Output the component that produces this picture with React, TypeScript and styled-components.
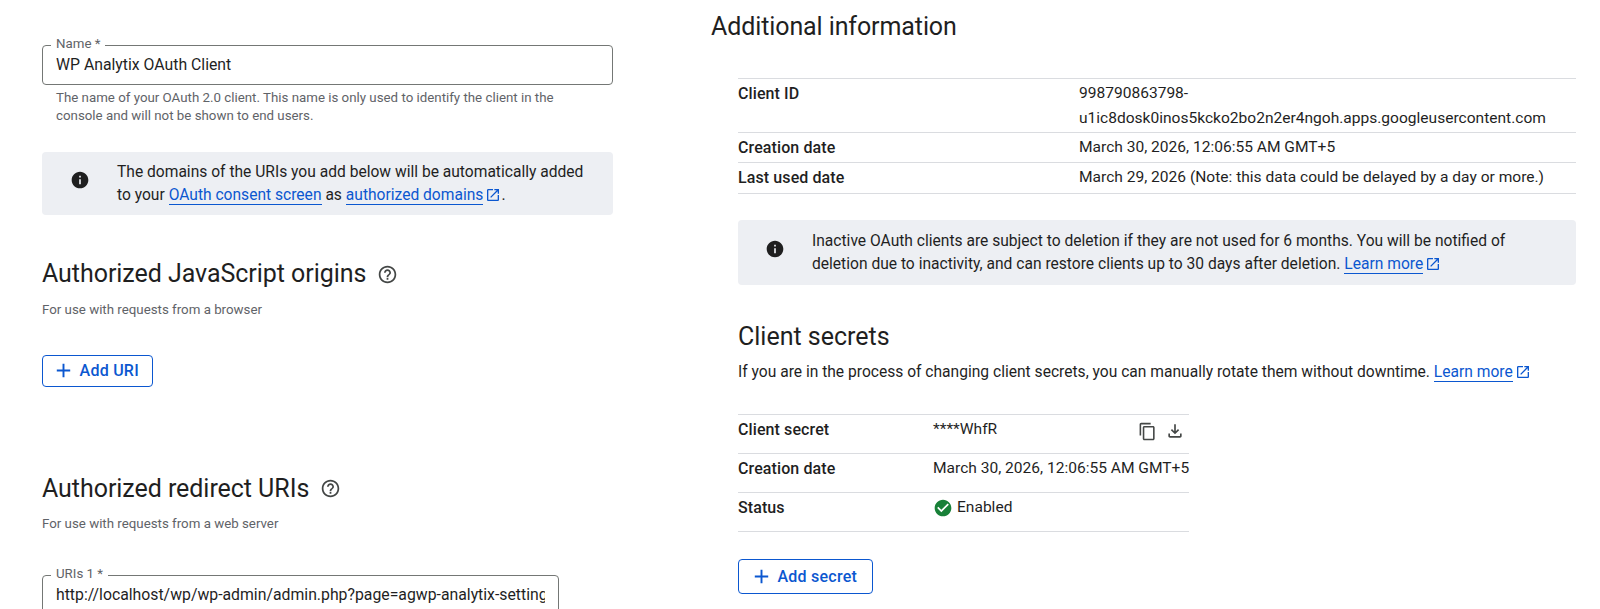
import * as React from 'react'
import styled, { createGlobalStyle } from 'styled-components'

const paths = {
  info: 'M12 2C6.48 2 2 6.48 2 12s4.48 10 10 10 10-4.48 10-10S17.52 2 12 2zm1 15h-2v-6h2v6zm0-8h-2V7h2v2z',
  help: 'M11 18h2v-2h-2v2zm1-16C6.48 2 2 6.48 2 12s4.48 10 10 10 10-4.48 10-10S17.52 2 12 2zm0 18c-4.41 0-8-3.59-8-8s3.59-8 8-8 8 3.59 8 8-3.59 8-8 8zm0-14c-2.21 0-4 1.79-4 4h2c0-1.1.9-2 2-2s2 .9 2 2c0 2-3 1.75-3 5h2c0-2.25 3-2.5 3-5 0-2.21-1.79-4-4-4z',
  external: 'M19 19H5V5h7V3H5c-1.11 0-2 .9-2 2v14c0 1.1.89 2 2 2h14c1.1 0 2-.9 2-2v-7h-2v7zM14 3v2h3.59l-9.83 9.83 1.41 1.41L19 6.41V10h2V3h-7z',
  copy: 'M16 1H4c-1.1 0-2 .9-2 2v14h2V3h12V1zm3 4H8c-1.1 0-2 .9-2 2v14c0 1.1.9 2 2 2h11c1.1 0 2-.9 2-2V7c0-1.1-.9-2-2-2zm0 16H8V7h11v14z',
  download: 'M12 16l-5-5 1.4-1.45 2.6 2.6V4h2v8.15l2.6-2.6L17 11l-5 5zM6 20c-.55 0-1.02-.2-1.41-.59C4.2 19.02 4 18.55 4 18v-3h2v3h12v-3h2v3c0 .55-.2 1.02-.59 1.41-.39.39-.86.59-1.41.59H6z',
  check: 'M12 2C6.48 2 2 6.48 2 12s4.48 10 10 10 10-4.48 10-10S17.52 2 12 2zm-2 15l-5-5 1.41-1.41L10 14.17l7.59-7.59L19 8l-9 9z',
  plus: 'M19 13h-6v6h-2v-6H5v-2h6V5h2v6h6v2z',
}

const Icon = ({ name, size, color }: { name: keyof typeof paths; size: number; color: string }) => (
  <Glyph width={size} height={size} viewBox="0 0 24 24" fill={color}>
    <path d={paths[name]} />
  </Glyph>
)

const External = () => (
  <ExternalWrap>
    <Icon name="external" size={16} color="#0b57d0" />
  </ExternalWrap>
)

const Rows = ({ rows }: { rows: { label: string; height: number; value: React.ReactNode; extra?: React.ReactNode }[] }) => (
  <>
    {rows.map(r => (
      <Row key={r.label} $height={r.height}>
        <RowLabel>{r.label}</RowLabel>
        <RowValue>{r.value}</RowValue>
        {r.extra}
      </Row>
    ))}
  </>
)

export default () => (
  <Page>
    <GlobalStyle />
    <LeftColumn>
      <Field $width={571}>
        <FieldLabel>Name *</FieldLabel>
        <FieldValue>WP Analytix OAuth Client</FieldValue>
      </Field>
      <Hint>
        The name of your OAuth 2.0 client. This name is only used to identify the client in the console and will not be
        shown to end users.
      </Hint>
      <Banner>
        <BannerIcon $width={75}>
          <Icon name="info" size={20} color="#1f1f1f" />
        </BannerIcon>
        <BannerText>
          <BannerLine>The domains of the URIs you add below will be automatically added</BannerLine>
          <BannerLine>
            to your <Link>OAuth consent screen</Link> as <Link>authorized domains</Link>
            <External />.
          </BannerLine>
        </BannerText>
      </Banner>
      <SectionHead $top={45}>
        <Heading>Authorized JavaScript origins</Heading>
        <HelpIcon>
          <Icon name="help" size={21} color="#444746" />
        </HelpIcon>
      </SectionHead>
      <Sub>For use with requests from a browser</Sub>
      <OutlineButton $width={111} $height={32} $top={37}>
        <Icon name="plus" size={23} color="#0b57d0" />
        Add URI
      </OutlineButton>
      <SectionHead $top={88}>
        <Heading>Authorized redirect URIs</Heading>
        <HelpIcon>
          <Icon name="help" size={21} color="#444746" />
        </HelpIcon>
      </SectionHead>
      <Sub>For use with requests from a web server</Sub>
      <UriField>
        <Field $width={517}>
          <FieldLabel>URIs 1 *</FieldLabel>
          <FieldValue>http://localhost/wp/wp-admin/admin.php?page=agwp-analytix-settings</FieldValue>
        </Field>
      </UriField>
    </LeftColumn>
    <RightColumn>
      <MainTitle>Additional information</MainTitle>
      <Content>
        <InfoTable>
          <Rows
            rows={[
              {
                label: 'Client ID',
                height: 54,
                value: (
                  <>
                    <div>998790863798-</div>
                    <div>u1ic8dosk0inos5kcko2bo2n2er4ngoh.apps.googleusercontent.com</div>
                  </>
                ),
              },
              { label: 'Creation date', height: 30, value: 'March 30, 2026, 12:06:55 AM GMT+5' },
              {
                label: 'Last used date',
                height: 31,
                value: 'March 29, 2026 (Note: this data could be delayed by a day or more.)',
              },
            ]}
          />
        </InfoTable>
        <WideBanner>
          <BannerIcon $width={74}>
            <Icon name="info" size={20} color="#1f1f1f" />
          </BannerIcon>
          <BannerText>
            <BannerLine>
              Inactive OAuth clients are subject to deletion if they are not used for 6 months. You will be notified of
            </BannerLine>
            <BannerLine>
              deletion due to inactivity, and can restore clients up to 30 days after deletion. <Link>Learn more</Link>
              <External />
            </BannerLine>
          </BannerText>
        </WideBanner>
        <SecretsTitle>Client secrets</SecretsTitle>
        <Lead>
          If you are in the process of changing client secrets, you can manually rotate them without downtime.{' '}
          <Link>Learn more</Link>
          <External />
        </Lead>
        <SecretsTable>
          <Rows
            rows={[
              {
                label: 'Client secret',
                height: 39,
                value: '****WhfR',
                extra: (
                  <RowActions>
                    <Icon name="copy" size={19} color="#444746" />
                    <Icon name="download" size={20} color="#444746" />
                  </RowActions>
                ),
              },
              { label: 'Creation date', height: 39, value: 'March 30, 2026, 12:06:55 AM GMT+5' },
              {
                label: 'Status',
                height: 39,
                value: (
                  <Status>
                    <Icon name="check" size={20} color="#188038" />
                    Enabled
                  </Status>
                ),
              },
            ]}
          />
        </SecretsTable>
        <OutlineButton $width={135} $height={35} $top={27}>
          <Icon name="plus" size={23} color="#0b57d0" />
          Add secret
        </OutlineButton>
      </Content>
    </RightColumn>
  </Page>
)

const GlobalStyle = createGlobalStyle`
  html, body {
    margin: 0;
    padding: 0;
    background: #fff;
  }
  body {
    font-family: Roboto, "Liberation Sans", sans-serif;
    color: #1f1f1f;
  }
`
const Page = styled.div`
  display: grid;
  grid-template-columns: 711px 1fr;
  width: 1600px;
  height: 609px;
  overflow: hidden;
`
const LeftColumn = styled.div`
  padding: 45px 0 0 42px;
  width: 571px;
`
const RightColumn = styled.div`
  padding-top: 12px;
`
const Content = styled.div`
  padding-left: 27px;
  width: 838px;
`
const Glyph = styled.svg`
  display: block;
  flex: none;
`
const ExternalWrap = styled.span`
  display: inline-block;
  vertical-align: -3px;
  margin-left: 2px;
`
const Field = styled.div<{ $width: number }>`
  position: relative;
  box-sizing: border-box;
  width: ${p => p.$width}px;
  height: 40px;
  border: 1px solid #747775;
  border-radius: 4px;
  padding: 0 13px 1px;
  display: flex;
  align-items: center;
`
const FieldLabel = styled.span`
  position: absolute;
  left: 8px;
  top: -10px;
  padding: 0 5px;
  background: #fff;
  font-size: 13.3px;
  line-height: 15px;
  color: #5f6368;
`
const FieldValue = styled.div`
  font-size: 15.8px;
  line-height: 22px;
  color: #1f1f1f;
  white-space: nowrap;
  overflow: hidden;
  flex: 1;
`
const Hint = styled.div`
  padding: 4px 40px 0 14px;
  font-size: 13.3px;
  line-height: 17.5px;
  color: #5f6368;
`
const Banner = styled.div`
  display: flex;
  align-items: center;
  margin-top: 28px;
  height: 63px;
  background: #edeff3;
  border-radius: 4px;
`
const WideBanner = styled(Banner)`
  margin-top: 26px;
  height: 65px;
  padding-top: 1px;
  box-sizing: border-box;
`
const BannerIcon = styled.div<{ $width: number }>`
  width: ${p => p.$width}px;
  flex: none;
  display: flex;
  justify-content: center;
  padding-bottom: 8px;
`
const BannerText = styled.div`
  flex: 1;
  font-size: 15.6px;
  line-height: 23px;
  color: #1f1f1f;
`
const BannerLine = styled.div`
  white-space: nowrap;
`
const Link = styled.a`
  color: #0b57d0;
  border-bottom: 1px solid #0b57d0;
`
const SectionHead = styled.div<{ $top: number }>`
  display: flex;
  align-items: center;
  margin-top: ${p => p.$top}px;
  height: 28px;
`
const Heading = styled.h2`
  margin: 0;
  font-size: 25px;
  line-height: 28px;
  font-weight: 400;
  letter-spacing: -0.05px;
  color: #1f1f1f;
`
const HelpIcon = styled.span`
  margin-left: 11px;
`
const Sub = styled.div`
  margin-top: 13.5px;
  font-size: 13.3px;
  line-height: 16px;
  color: #5f6368;
`
const OutlineButton = styled.div<{ $width: number; $height: number; $top: number }>`
  display: flex;
  align-items: center;
  justify-content: center;
  gap: 4.5px;
  box-sizing: border-box;
  width: ${p => p.$width}px;
  height: ${p => p.$height}px;
  margin-top: ${p => p.$top}px;
  padding-right: 4px;
  border: 1px solid #0b57d0;
  border-radius: 4px;
  font-size: 16px;
  font-weight: 500;
  letter-spacing: 0.25px;
  color: #0b57d0;
`
const UriField = styled.div`
  margin-top: 43px;
`
const MainTitle = styled.h1`
  margin: 0;
  font-size: 25px;
  line-height: 30px;
  font-weight: 400;
  letter-spacing: -0.1px;
  color: #1f1f1f;
`
const InfoTable = styled.div`
  margin-top: 36px;
  border-top: 1px solid #dadce0;
  --label-width: 341px;
`
const SecretsTable = styled.div`
  margin-top: 30px;
  width: 451px;
  border-top: 1px solid #dadce0;
  --label-width: 195px;
`
const Row = styled.div<{ $height: number }>`
  position: relative;
  display: flex;
  box-sizing: border-box;
  height: ${p => p.$height}px;
  padding-top: 2px;
  border-bottom: 1px solid #dadce0;
  font-size: 15.55px;
  line-height: 25px;
`
const RowLabel = styled.div`
  width: var(--label-width);
  flex: none;
  font-size: 16px;
  font-weight: 500;
  letter-spacing: 0.1px;
  color: #1f1f1f;
`
const RowValue = styled.div`
  flex: 1;
  white-space: nowrap;
  color: #1f1f1f;
`
const RowActions = styled.div`
  position: absolute;
  right: 4px;
  top: 6px;
  display: flex;
  align-items: center;
  gap: 8px;
`
const Status = styled.span`
  display: flex;
  align-items: center;
  gap: 4px;
`
const SecretsTitle = styled.h2`
  margin: 38px 0 0;
  font-size: 25px;
  line-height: 28px;
  font-weight: 400;
  color: #1f1f1f;
`
const Lead = styled.div`
  margin-top: 9px;
  font-size: 15.6px;
  line-height: 24px;
  color: #1f1f1f;
`
